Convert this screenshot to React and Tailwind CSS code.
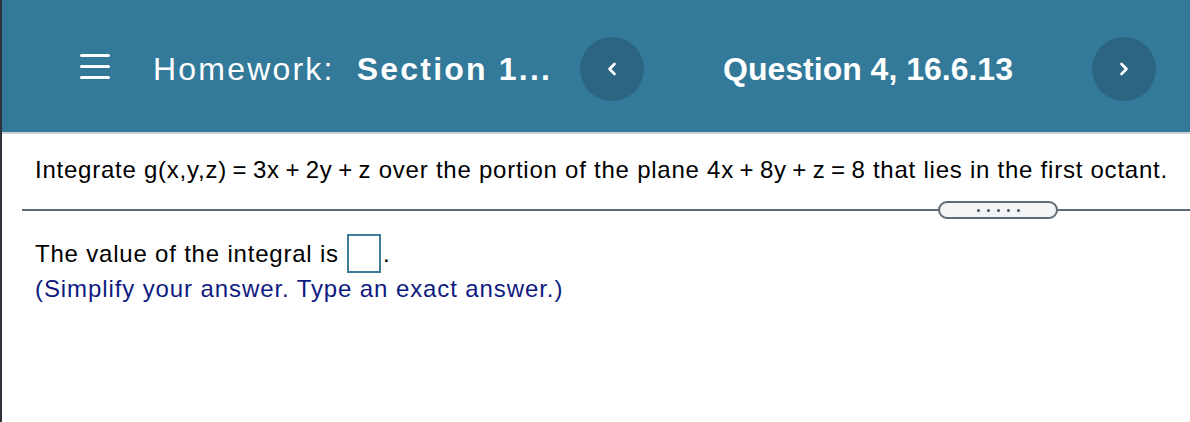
import React from 'react';

const Chevron = ({ dir }) => (
  <svg width="12" height="16" viewBox="0 0 12 16" fill="none" stroke="white" strokeWidth="2.6" strokeLinecap="round" strokeLinejoin="round">
    {dir === 'left' ? <polyline points="8.5,3 3.5,8 8.5,13" /> : <polyline points="3.5,3 8.5,8 3.5,13" />}
  </svg>
);

const NavButton = ({ dir }) => (
  <button className="w-16 h-16 rounded-full bg-[#2c6581] flex items-center justify-center shrink-0">
    <Chevron dir={dir} />
  </button>
);

// thin spaces around operators, as in the typeset math
const t = '\u2009';

const App = () => {
  return (
    <div className="w-[1190px] h-[422px] overflow-hidden bg-white border-l-2 border-[#2e3439] flex flex-col font-['Liberation_Sans',Arial,sans-serif]">
      {/* top bar */}
      <header className="h-[134px] shrink-0 bg-[#32799a] border-b-2 border-[#c9d1d7] flex items-center pt-[6px] text-white">
        <div className="ml-[78px] mb-[5px] w-[30px] flex flex-col gap-[8px]">
          <span className="h-[3px] rounded-full bg-white" />
          <span className="h-[3px] rounded-full bg-white" />
          <span className="h-[3px] rounded-full bg-white" />
        </div>
        <div className="ml-[43px] w-[427px] text-[32px] tracking-[2.2px] whitespace-nowrap">
          Homework:&nbsp; <span className="font-bold">Section 1...</span>
        </div>
        <NavButton dir="left" />
        <div className="flex-1 flex justify-center text-[32px] font-bold whitespace-nowrap">Question 4, 16.6.13</div>
        <NavButton dir="right" />
        <div className="w-[34px] shrink-0" />
      </header>

      {/* question */}
      <div className="pl-[33px] mt-[22px] text-[24px] leading-[28px] tracking-[0.76px] text-black whitespace-nowrap">
        Integrate g(x,y,z){t}={t}3x{t}+{t}2y{t}+{t}z over the portion of the plane 4x{t}+{t}8y{t}+{t}z{t}={t}8 that lies in the first octant.
      </div>

      <div className="ml-[20px] mt-[17px] flex items-center">
        <div className="flex-1 h-[2px] bg-[#5e6a76]" />
        <button className="w-[120px] h-[18px] rounded-[9px] border-2 border-[#5e6a76] bg-[#f2f4f6] flex items-center justify-center gap-[7px]">
          <span className="w-[3px] h-[3px] rounded-full bg-[#4a525a]" />
          <span className="w-[3px] h-[3px] rounded-full bg-[#4a525a]" />
          <span className="w-[3px] h-[3px] rounded-full bg-[#4a525a]" />
          <span className="w-[3px] h-[3px] rounded-full bg-[#4a525a]" />
          <span className="w-[3px] h-[3px] rounded-full bg-[#4a525a]" />
        </button>
        <div className="w-[132px] h-[2px] bg-[#5e6a76]" />
      </div>

      {/* answer */}
      <div className="pl-[33px] mt-[15px] flex items-center text-[24px] leading-[28px] tracking-[0.8px] text-black whitespace-nowrap">
        <span>The value of the integral is</span>
        <span className="ml-[8px] w-[34px] h-[39px] border-2 border-[#3d7c9a] bg-white" />
        <span className="ml-[2px]">.</span>
      </div>
      <div className="pl-[33px] mt-[2px] text-[24px] leading-[28px] tracking-[0.9px] text-[#0f1b80] whitespace-nowrap">
        (Simplify your answer. Type an exact answer.)
      </div>
    </div>
  );
};

export default App;
